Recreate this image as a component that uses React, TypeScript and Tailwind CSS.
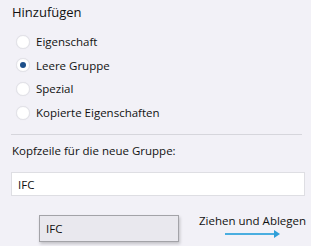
import React from 'react';

const options = ['Eigenschaft', 'Leere Gruppe', 'Spezial', 'Kopierte Eigenschaften'];

function Radio({ checked }: { checked: boolean }) {
  return (
    <span className="flex h-[14px] w-[14px] items-center justify-center rounded-full border border-[#e2e2e8] bg-white shadow-[0_0_1px_rgba(0,0,0,0.08)]">
      {checked && <span className="h-[6px] w-[6px] rounded-full bg-[#1c4f8a]" />}
    </span>
  );
}

export default function App() {
  return (
    <div
      className="h-[246px] w-[311px] overflow-hidden bg-[#f2f1f7] text-[#111111]"
      style={{ fontFamily: '"Open Sans", "Noto Sans", sans-serif' }}
    >
      <div className="px-[11px] pt-[3px]">
        <h2 className="pl-[1px] text-[13px] leading-[18px]">Hinzufügen</h2>

        <div className="mt-[9px] flex flex-col pl-[5px]">
          {options.map((o, i) => (
            <label key={o} className="flex h-[23.6px] items-center gap-[6px] text-[11.5px]">
              <Radio checked={i === 1} />
              <span className="whitespace-nowrap">{o}</span>
            </label>
          ))}
        </div>

        <div className="mt-[10px] h-px w-[291px] bg-[#d6d6dc]" />

        <p className="mt-[7px] pl-[1px] text-[11.5px] leading-[18px]">Kopfzeile für die neue Gruppe:</p>

        <div className="mt-[12px] flex h-[24px] w-[294px] items-center border border-[#dedee3] bg-white pl-[6px] text-[11.5px]">
          IFC
        </div>

        <div className="mt-[17px] flex items-start">
          <div className="ml-[28px] mt-[2px] flex h-[27px] w-[140px] shrink-0 items-center border border-[#a3a3a8] bg-[#e9e8ee] pl-[6px] text-[11.5px] shadow-[1px_2px_3px_rgba(0,0,0,0.2)]">
            IFC
          </div>
          <div className="ml-[20px] flex flex-col">
            <span className="whitespace-nowrap text-[11.5px] leading-[16px]">Ziehen und Ablegen</span>
            <svg width="56" height="8" viewBox="0 0 56 8" className="ml-[26px] mt-[1px]">
              <line x1="0" y1="4" x2="50" y2="4" stroke="#4aaee0" strokeWidth="2" />
              <polygon points="49,0 55,4 49,8" fill="#2f9fd8" />
            </svg>
          </div>
        </div>
      </div>
    </div>
  );
}
